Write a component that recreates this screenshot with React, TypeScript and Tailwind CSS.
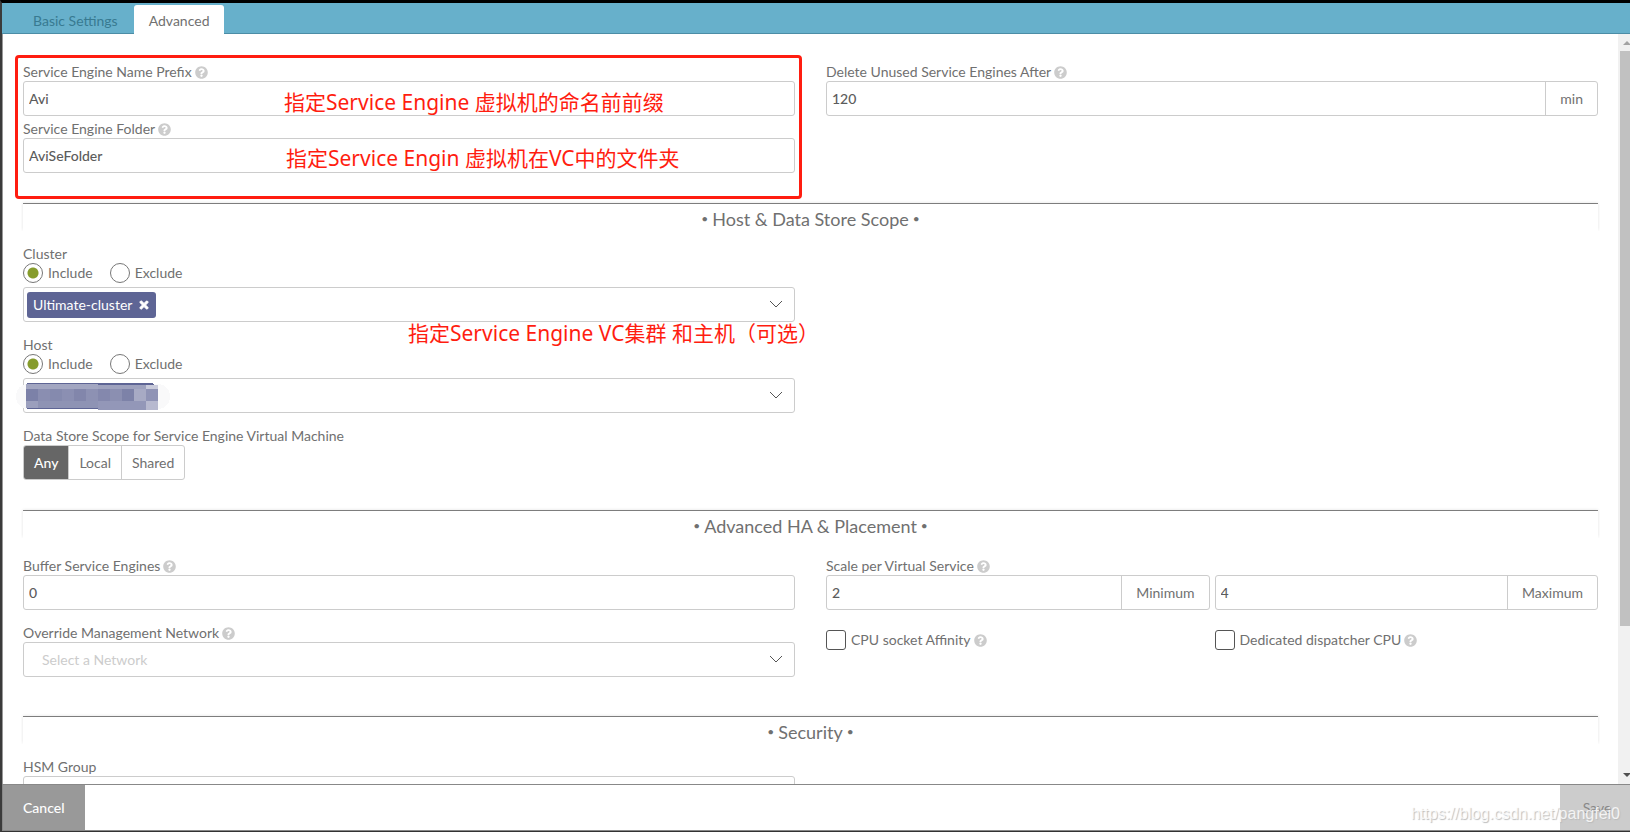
import type { InputHTMLAttributes, ReactNode } from "react"
import { FaQuestionCircle, FaTimes } from "react-icons/fa"

const box = "h-[35px] rounded-[3px] border border-[#ccc] bg-white"

function Label({ htmlFor, help, children }: { htmlFor?: string; help?: boolean; children: ReactNode }) {
  return (
    <label htmlFor={htmlFor} className="flex h-[18px] items-center gap-[3px] text-sm leading-[18px]">
      {children}
      {help && <FaQuestionCircle className="size-[13px] text-[#ccc]" />}
    </label>
  )
}

type TextFieldProps = InputHTMLAttributes<HTMLInputElement> & { addon?: string }

function TextField({ addon, ...props }: TextFieldProps) {
  return (
    <div className={`${box} flex min-w-0 flex-1 overflow-hidden`}>
      <input {...props} className="min-w-0 flex-1 px-[5px] text-sm font-medium text-[#5c5c5c] outline-none" />
      {addon && (
        <span className="flex items-center border-l border-[#ccc] px-3.5 text-sm">{addon}</span>
      )}
    </div>
  )
}

function Select({ id, placeholder, children }: { id: string; placeholder?: string; children?: ReactNode }) {
  return (
    <div className="relative">
      <select id={id} className={`${box} block w-full appearance-none pl-[18px] text-sm text-[#ccc] outline-none`}>
        <option>{placeholder}</option>
      </select>
      {children}
      <svg viewBox="0 0 14 8" className="pointer-events-none absolute top-[13px] right-3 h-2 w-3.5" fill="none" stroke="#555">
        <path d="M1 1l6 6 6-6" />
      </svg>
    </div>
  )
}

function Section({ title, children }: { title: string; children: ReactNode }) {
  return (
    <section>
      <div className="h-[42px] border-t border-[#888]">
        <h2 className="flex h-[27px] items-center justify-center gap-1 pt-0.5 text-lg leading-6 shadow-[0_-1px_3px_rgba(0,0,0,0.12)] [clip-path:inset(-5px_-2px_0_-2px)]">
          <span className="text-xs">•</span>
          {title}
          <span className="text-xs">•</span>
        </h2>
      </div>
      {children}
    </section>
  )
}

function IncludeExclude({ name }: { name: string }) {
  const radio =
    "size-5 appearance-none rounded-full border border-[#777] bg-white checked:bg-[radial-gradient(circle,#869c2c_5px,transparent_6px)]"
  return (
    <div className="mb-1 flex h-5 items-center gap-[17px] text-sm">
      <label className="flex items-center gap-[5px]">
        <input type="radio" name={name} defaultChecked className={radio} />
        Include
      </label>
      <label className="flex items-center gap-[5px]">
        <input type="radio" name={name} className={radio} />
        Exclude
      </label>
    </div>
  )
}

function CheckField({ children }: { children: ReactNode }) {
  return (
    <label className="flex items-center gap-[5px] text-sm">
      <input type="checkbox" className="size-5 appearance-none rounded-[3px] border border-[#555] bg-white" />
      <span className="flex items-center gap-[3px]">
        {children}
        <FaQuestionCircle className="size-[13px] text-[#ccc]" />
      </span>
    </label>
  )
}

function Note({ className, children }: { className: string; children: ReactNode }) {
  return (
    <p
      className={`pointer-events-none absolute font-['Noto_Sans','Noto_Sans_CJK_SC',sans-serif] text-[21px] leading-7 whitespace-nowrap text-[#ff1d10] ${className}`}
    >
      {children}
    </p>
  )
}

// host name hidden behind a mosaic
function MaskedHost() {
  const cells = ["#7c81a8", "#8a8eb1", "#858aae", "#8b8fb2", "#8286ab", "#8d91b3", "#8488ad", "#8b8fb1", "#7d82a8", "#a7aac4", "#8f93b5"]
  return (
    <svg viewBox="0 0 154 28" className="pointer-events-none absolute top-1 -left-[7px] h-7 w-[154px]" shapeRendering="crispEdges">
      <rect y="2" width="154" height="25" rx="12" fill="#f9f9fa" />
      <rect x="10" y="1" width="128" height="26" rx="3" fill="#5e6595" />
      <rect x="10" y="2" width="72" height="5" fill="#a2a6c1" />
      <rect x="82" y="3" width="48" height="4" fill="#9ea2be" />
      <rect x="130" y="3" width="12" height="4" fill="#c9cbdb" />
      {cells.map((fill, i) => (
        <rect key={i} x={10 + i * 12} y="7" width="12" height="12" fill={fill} />
      ))}
      <rect x="10" y="19" width="12" height="7" fill="#9b9fbd" />
      <rect x="22" y="19" width="60" height="7" fill="#8e93b4" />
      <rect x="82" y="19" width="48" height="9" fill="#9397b8" />
      <rect x="130" y="19" width="12" height="9" fill="#b7b9cf" />
    </svg>
  )
}

export default function App() {
  return (
    <div className="flex h-screen flex-col border-t-[3px] border-b border-l-2 border-t-black border-b-[#333] border-l-[#3b3b3b] bg-white font-[Lato,sans-serif] text-[#707070]">
      <nav className="flex h-[31px] shrink-0 items-end border-b border-[#4c8da6] bg-[#67b0cb] text-sm">
        <button className="h-7 pt-1 pr-4 pl-[31px] text-[#387a91]">Basic Settings</button>
        <button className="-mb-px h-[29px] rounded-t-[3px] bg-white px-[15px] pt-0.5">Advanced</button>
      </nav>

      <div className="flex min-h-0 flex-1 border-l border-[#999]">
        <main className="min-w-0 flex-1 overflow-hidden pt-[29px] pr-5 pl-5">
          <div className="relative grid grid-cols-2 gap-x-[31px] pb-[30px]">
            <div>
              <Label htmlFor="prefix" help>Service Engine Name Prefix</Label>
              <TextField id="prefix" defaultValue="Avi" />
              <div className="mt-1">
                <Label htmlFor="folder" help>Service Engine Folder</Label>
                <TextField id="folder" defaultValue="AviSeFolder" />
              </div>
            </div>
            <div>
              <Label htmlFor="unused" help>Delete Unused Service Engines After</Label>
              <TextField id="unused" defaultValue="120" addon="min" />
            </div>
            <div className="pointer-events-none absolute -top-2 right-1/2 bottom-1 -left-2 mr-[9px] rounded border-[3px] border-[#ff1d10]" />
            <Note className="top-[25px] left-[261px]">指定Service Engine 虚拟机的命名前前缀</Note>
            <Note className="top-[81px] left-[263px]">指定Service Engin 虚拟机在VC中的文件夹</Note>
          </div>

          <Section title="Host & Data Store Scope">
            <div className="relative grid grid-cols-2 gap-x-[31px] pb-[30px]">
              <div className="flex flex-col gap-3.5">
                <div>
                  <Label htmlFor="cluster">Cluster</Label>
                  <IncludeExclude name="cluster-scope" />
                  <Select id="cluster">
                    <span className="absolute top-[5px] left-1 flex h-[26px] items-center gap-1.5 rounded-[3px] bg-[#5e6595] px-1.5 text-sm text-white">
                      Ultimate-cluster
                      <button aria-label="Remove Ultimate-cluster">
                        <FaTimes className="size-3" stroke="currentColor" strokeWidth="40" />
                      </button>
                    </span>
                  </Select>
                </div>
                <div>
                  <Label htmlFor="host">Host</Label>
                  <IncludeExclude name="host-scope" />
                  <Select id="host">
                    <MaskedHost />
                  </Select>
                </div>
                <div>
                  <Label>Data Store Scope for Service Engine Virtual Machine</Label>
                  <div className={`${box} inline-flex divide-x divide-[#ccc] overflow-hidden align-top text-sm`}>
                    <button className="bg-[#666] px-2.5 font-medium text-white">Any</button>
                    <button className="px-2.5">Local</button>
                    <button className="px-2.5">Shared</button>
                  </div>
                </div>
              </div>
              <Note className="top-[74px] left-[385px]">指定Service Engine VC集群 和主机（可选）</Note>
            </div>
          </Section>

          <Section title="Advanced HA & Placement">
            <div className="grid grid-cols-2 gap-x-[31px] gap-y-3.5 pt-[5px] pb-[39px]">
              <div>
                <Label htmlFor="buffer" help>Buffer Service Engines</Label>
                <TextField id="buffer" defaultValue="0" />
              </div>
              <div>
                <Label htmlFor="scale-min" help>Scale per Virtual Service</Label>
                <div className="flex gap-[5px]">
                  <TextField id="scale-min" defaultValue="2" addon="Minimum" />
                  <TextField aria-label="Maximum" defaultValue="4" addon="Maximum" />
                </div>
              </div>
              <div>
                <Label htmlFor="network" help>Override Management Network</Label>
                <Select id="network" placeholder="Select a Network" />
              </div>
              <div className="grid grid-cols-2 items-start gap-[5px] pt-1.5">
                <CheckField>CPU socket Affinity</CheckField>
                <CheckField>Dedicated dispatcher CPU</CheckField>
              </div>
            </div>
          </Section>

          <Section title="Security">
            <div className="grid grid-cols-2 gap-x-[31px]">
              <div>
                <Label htmlFor="hsm">HSM Group</Label>
                <Select id="hsm" />
              </div>
            </div>
          </Section>
        </main>

        <div aria-hidden className="flex w-3 shrink-0 flex-col bg-[#f1f1f1] pl-0.5">
          <svg viewBox="0 0 10 17" className="h-[17px] w-2.5 shrink-0" fill="#a3a3a3">
            <path d="M3 11l4-4 4 4z" />
          </svg>
          <div className="h-[575px] bg-[#c1c1c1]" />
          <svg viewBox="0 0 10 17" className="mt-auto h-[17px] w-2.5 shrink-0" fill="#505050">
            <path d="M3 6l4 4 4-4z" />
          </svg>
        </div>
      </div>

      <footer className="relative flex h-[47px] shrink-0 justify-between border-y border-l border-[#888] text-sm">
        <button className="bg-[#999] px-5 font-medium text-white">Cancel</button>
        <button className="w-[70px] bg-[#ccc] pl-1 text-[#888]">Save</button>
        <span className="pointer-events-none absolute right-2.5 bottom-1 font-['Liberation_Sans',sans-serif] text-base leading-6 text-white/80 [text-shadow:1px_1px_1px_#bbb]">
          https://blog.csdn.net/pangfei0
        </span>
      </footer>
    </div>
  )
}
